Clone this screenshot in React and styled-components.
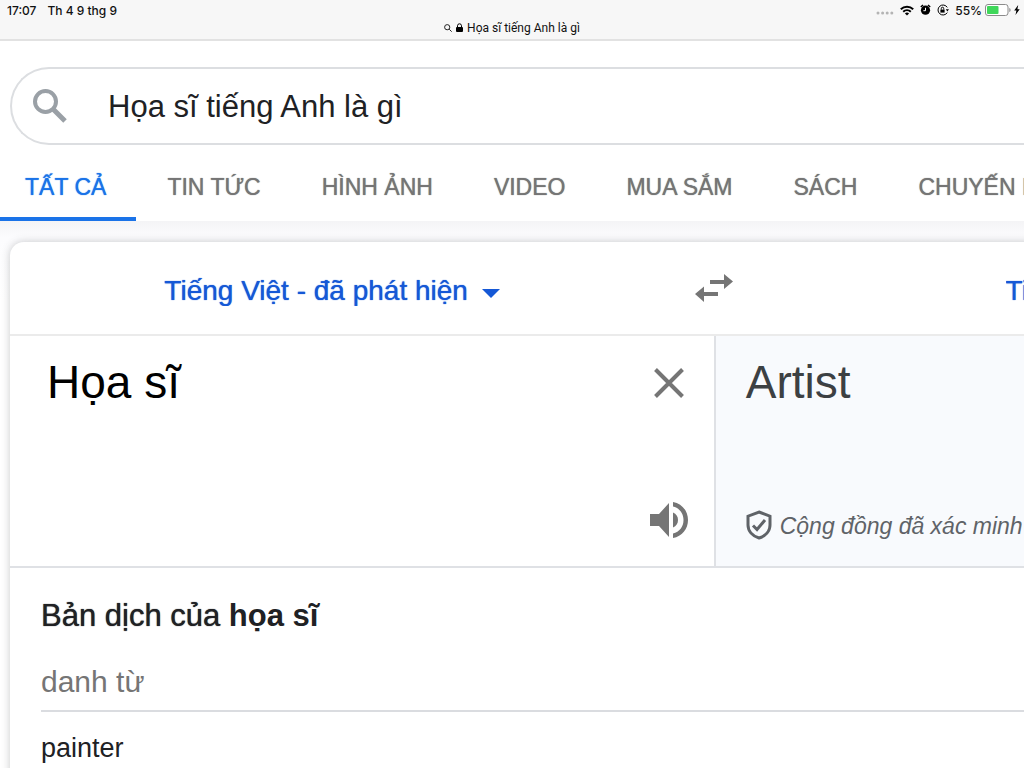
import React, { useState } from 'react';
import styled, { createGlobalStyle } from 'styled-components';

const tabs = ['TẤT CẢ', 'TIN TỨC', 'HÌNH ẢNH', 'VIDEO', 'MUA SẮM', 'SÁCH', 'CHUYẾN BAY'];

function StatusIcons() {
  return (
    <StatusGroup>
      <svg width="18" height="12" viewBox="0 0 18 12" fill="#b4b4b4">
        <circle cx="2" cy="9" r="1.5" />
        <circle cx="6.6" cy="9" r="1.5" />
        <circle cx="11.2" cy="9" r="1.5" />
        <circle cx="15.8" cy="9" r="1.5" />
      </svg>
      <svg width="14" height="11" viewBox="0 0 14 11" fill="none" stroke="#000" strokeWidth="2">
        <path d="M.8 4.2a9 9 0 0 1 12.4 0M3.2 6.8a5.6 5.6 0 0 1 7.6 0" />
        <path d="M7 10.6 4.9 8.5a3 3 0 0 1 4.2 0z" fill="#000" stroke="none" />
      </svg>
      <svg width="11" height="12" viewBox="0 0 11 12">
        <circle cx="5.5" cy="6.2" r="4.6" fill="#000" />
        <path d="M.8 3 3 1M10.2 3 8 1" stroke="#000" strokeWidth="1.5" />
        <path d="M5.5 3.8v2.9H3.4" fill="none" stroke="#fff" />
      </svg>
      <svg width="12" height="12" viewBox="0 0 12 12" fill="none" stroke="#000">
        <path d="M10.3 3.4A5 5 0 1 0 10.3 8.6" />
        <path d="M8.8 5.2h3.2L10.4 7.4z" fill="#000" stroke="none" />
        <path d="M3.4 5.6h4.2v3H3.4z" fill="#000" stroke="none" />
        <path d="M4.3 5.6V4.4a1.2 1.2 0 0 1 2.4 0v1.2" />
      </svg>
      <StatusGroup $gap="3px">
        <span>55%</span>
        <svg width="26" height="12" viewBox="0 0 26 12">
          <rect x=".5" y=".5" width="22.5" height="11" rx="2.5" fill="#fff" stroke="#8b8b8b" />
          <rect x="2" y="2" width="11.5" height="8" rx="1" fill="#3fd75a" />
          <path d="M24.3 4v4c.9-.4 1.3-1.1 1.3-2s-.4-1.6-1.3-2z" fill="#8b8b8b" />
        </svg>
        <svg width="6" height="10" viewBox="0 0 6 10">
          <path d="M4.200 0 .2 5.500h2.200L1.500 10l4.200-5.800H3.400z" fill="#000" />
        </svg>
      </StatusGroup>
    </StatusGroup>
  );
}

function BrowserBar() {
  return (
    <BarContainer>
      <StatusRow>
        <StatusGroup $gap="11px">
          <span>17:07</span>
          <span>Th 4 9 thg 9</span>
        </StatusGroup>
        <StatusIcons />
      </StatusRow>
      <Address>
        <svg width="8" height="8" viewBox="0 0 8 8" fill="none" stroke="#222">
          <circle cx="3.2" cy="3.2" r="2.6" />
          <path d="m5.2 5.2 2.5 2.5" />
        </svg>
        <svg width="7" height="9" viewBox="0 0 7 9">
          <rect x="0" y="4" width="7" height="5" rx="1" />
          <path d="M1.5 4.500V2.800a2 2 0 0 1 4 0v1.700" fill="none" stroke="#000" />
        </svg>
        <AddressText>Họa sĩ tiếng Anh là gì</AddressText>
      </Address>
    </BarContainer>
  );
}

function Language(props) {
  return (
    <LanguageLabel $target={props.target}>
      <LanguageSelect aria-label={props.label}>
        <option>{props.value}</option>
      </LanguageSelect>
      <Caret width="18" height="9" viewBox="0 0 18 9">
        <path d="M0 0h18L9 9z" fill="#1558d6" />
      </Caret>
    </LanguageLabel>
  );
}

export default function App() {
  const [query, setQuery] = useState('Họa sĩ tiếng Anh là gì');
  const [source, setSource] = useState('Họa sĩ');
  const [tab, setTab] = useState(tabs[0]);

  return (
    <Page>
      <GlobalStyle />
      <BrowserBar />
      <Top>
        <SearchBox>
          <svg width="34" height="34" viewBox="0 0 34 34" fill="none" stroke="#9aa0a6">
            <circle cx="12.5" cy="12.5" r="10.5" strokeWidth="4" />
            <path d="m20 20 12 12" strokeWidth="5" />
          </svg>
          <SearchInput
            type="text"
            aria-label="Tìm kiếm"
            value={query}
            onChange={(e) => setQuery(e.target.value)}
          />
        </SearchBox>
        <Tabs>
          {tabs.map((el) => (
            <Tab key={el} href="#" $active={el === tab} onClick={() => setTab(el)}>
              {el}
            </Tab>
          ))}
        </Tabs>
      </Top>

      <Results>
        <Card>
          <Languages>
            <Language label="Ngôn ngữ nguồn" value="Tiếng Việt - đã phát hiện" />
            <IconButton aria-label="Hoán đổi ngôn ngữ">
              <svg width="38" height="28" viewBox="0 0 38 28" fill="#757575">
                <path d="M15 6h14V0l9 7.500-9 7.500V10H15z" />
                <path d="M23 18H9v-5.500L0 20l9 8v-6h14z" />
              </svg>
            </IconButton>
            <Language label="Ngôn ngữ đích" value="Tiếng Anh" target />
          </Languages>

          <Panes>
            <SourcePane>
              <SourceText
                aria-label="Văn bản nguồn"
                value={source}
                onChange={(e) => setSource(e.target.value)}
              />
              <PaneButtons>
                <IconButton aria-label="Xóa" onClick={() => setSource('')}>
                  <svg width="38" height="30" viewBox="0 0 38 30" stroke="#757575" strokeWidth="4">
                    <path d="m5.500 1.500 27 27M32.500 1.500l-27 27" />
                  </svg>
                </IconButton>
                <IconButton aria-label="Nghe">
                  <svg width="38" height="38" viewBox="0 0 38 38" fill="#757575">
                    <path d="M0 13h9L19 2v34L9 25H0z" />
                    <path d="M23 11.500c3.200 1.200 5 4 5 7.500s-1.800 6.300-5 7.500z" />
                    <path d="M23 1c9 1.500 15 9 15 18s-6 16.500-15 18v-4.500c6.500-1.500 10.500-7 10.500-13.500S29.500 7 23 5.500z" />
                  </svg>
                </IconButton>
              </PaneButtons>
            </SourcePane>
            <TargetPane>
              <TargetText>Artist</TargetText>
              <Verified>
                <svg width="26" height="30" viewBox="0 0 26 30" fill="none" stroke="#5f6368" strokeWidth="3">
                  <path d="M13 2 24 6.200V15c0 6-4.500 11-11 13C6.500 26 2 21 2 15V6.200z" />
                  <path d="m7 15.500 4 4 8-9.500" />
                </svg>
                <VerifiedText>Cộng đồng đã xác minh</VerifiedText>
              </Verified>
            </TargetPane>
          </Panes>

          <Dictionary>
            <DictionaryTitle>
              Bản dịch của <b>họa sĩ</b>
            </DictionaryTitle>
            <WordType>danh từ</WordType>
            <Word>painter</Word>
          </Dictionary>
        </Card>
      </Results>
    </Page>
  );
}

const GlobalStyle = createGlobalStyle`
  * {
    box-sizing: border-box;
  }
  body {
    margin: 0;
    background: #fff;
    font-family: "Liberation Sans", Arial, sans-serif;
    overflow: hidden;
  }
  svg {
    display: block;
    flex-shrink: 0;
  }
`;

const Page = styled.div`
  height: 100vh;
  overflow: hidden;
`;

const BarContainer = styled.header`
  position: relative;
  z-index: 1;
  background: #f7f7f7;
  border-bottom: 2px solid #e2e2e2;
  color: #111;
`;

const StatusRow = styled.div`
  display: flex;
  justify-content: space-between;
  height: 20px;
  padding: 0 4px 0 7px;
  font-family: Inter, sans-serif;
  font-size: 12px;
  font-weight: 500;
`;

const StatusGroup = styled.div`
  display: flex;
  align-items: center;
  gap: ${(props) => props.$gap || '6px'};
`;

const Address = styled.div`
  display: flex;
  align-items: center;
  justify-content: center;
  gap: 4px;
  height: 19px;
  padding-bottom: 4px;
`;

const AddressText = styled.span`
  font-family: Roboto, sans-serif;
  font-size: 12px;
`;

const Top = styled.div`
  padding-top: 26px;
  box-shadow: 0 2px 12px rgba(60, 64, 67, 0.2);
`;

const SearchBox = styled.div`
  display: flex;
  align-items: center;
  gap: 41px;
  height: 78px;
  margin-left: 10px;
  padding-left: 21px;
  border: 2px solid #dcdee1;
  border-right: 0;
  border-radius: 39px 0 0 39px;
`;

const SearchInput = styled.input`
  flex: 1;
  min-width: 0;
  padding: 2px 0 0;
  border: 0;
  outline: 0;
  background: none;
  color: #202124;
  font-family: inherit;
  font-size: 31px;
`;

const Tabs = styled.nav`
  display: flex;
  height: 76px;
  overflow: hidden;
`;

const Tab = styled.a`
  flex-shrink: 0;
  padding: 0 30px 0 31px;
  border-bottom: 4px solid ${(props) => (props.$active ? '#1a73e8' : 'transparent')};
  color: ${(props) => (props.$active ? '#1a73e8' : '#757575')};
  font-size: 23px;
  line-height: 84px;
  text-decoration: none;
  text-shadow: 0 0 1px currentColor;
  white-space: nowrap;

  &:first-child {
    padding-left: 25px;
  }
`;

const Results = styled.main`
  padding: 21px 0 0 10px;
  background: linear-gradient(#f4f4f6, #fcfcfe 16px, #fff 80px);
`;

const Card = styled.section`
  width: calc(139% - 2px);
  background: #fff;
  border-radius: 14px 0 0 0;
  box-shadow: 0 0 8px rgba(60, 64, 67, 0.28);
`;

const Languages = styled.div`
  display: grid;
  grid-template-columns: 1fr auto 1fr;
  align-items: center;
  height: 94px;
  border-bottom: 2px solid #ebebeb;
`;

const LanguageLabel = styled.label`
  display: flex;
  align-items: center;
  justify-content: center;
  gap: 14px;
  padding: ${(props) => (props.$target ? '4px 0 0 20px' : '4px 40px 0 0')};
`;

const LanguageSelect = styled.select`
  appearance: none;
  padding: 0;
  border: 0;
  background: none;
  color: #1558d6;
  font-family: inherit;
  font-size: 28px;
  text-shadow: 0 0 1px currentColor;
`;

const Caret = styled.svg`
  margin-top: 6px;
`;

const IconButton = styled.button`
  padding: 0;
  border: 0;
  background: none;
  cursor: pointer;
`;

const Panes = styled.div`
  display: grid;
  grid-template-columns: 1fr 1fr;
  height: 232px;
  border-bottom: 2px solid #dfe1e5;
`;

const SourcePane = styled.div`
  display: flex;
  padding: 18px 26px 27px 37px;
`;

const SourceText = styled.textarea`
  flex: 1;
  min-width: 0;
  padding: 0;
  border: 0;
  outline: 0;
  resize: none;
  background: none;
  color: #000;
  font-family: inherit;
  font-size: 46px;
  line-height: 56px;
`;

const PaneButtons = styled.div`
  display: flex;
  flex-direction: column;
  justify-content: space-between;
  padding-top: 14px;
`;

const TargetPane = styled.div`
  display: flex;
  flex-direction: column;
  justify-content: space-between;
  padding: 18px 30px 26px;
  background: #f8fafd;
  border-left: 2px solid #dfe1e5;
`;

const TargetText = styled.div`
  color: #3c4043;
  font-size: 46px;
  line-height: 56px;
`;

const Verified = styled.div`
  display: flex;
  align-items: center;
  gap: 8px;
  color: #5f6368;
  font-size: 23px;
  font-style: italic;
  white-space: nowrap;
`;

const VerifiedText = styled.span`
  padding-top: 4px;
`;

const Dictionary = styled.div`
  padding: 28px 0 32px 31px;
  color: #202124;
`;

const DictionaryTitle = styled.h2`
  margin: 0;
  font-size: 31px;
  font-weight: 400;
  line-height: 40px;
  text-shadow: 0 0 1px currentColor;

  b {
    text-shadow: none;
  }
`;

const WordType = styled.h3`
  margin: 0;
  padding: 26px 0 8px;
  border-bottom: 2px solid #dadce0;
  color: #757575;
  font-size: 30px;
  font-weight: 400;
  line-height: 40px;
`;

const Word = styled.p`
  margin: 0;
  padding-top: 16px;
  font-size: 27px;
  line-height: 40px;
`;
